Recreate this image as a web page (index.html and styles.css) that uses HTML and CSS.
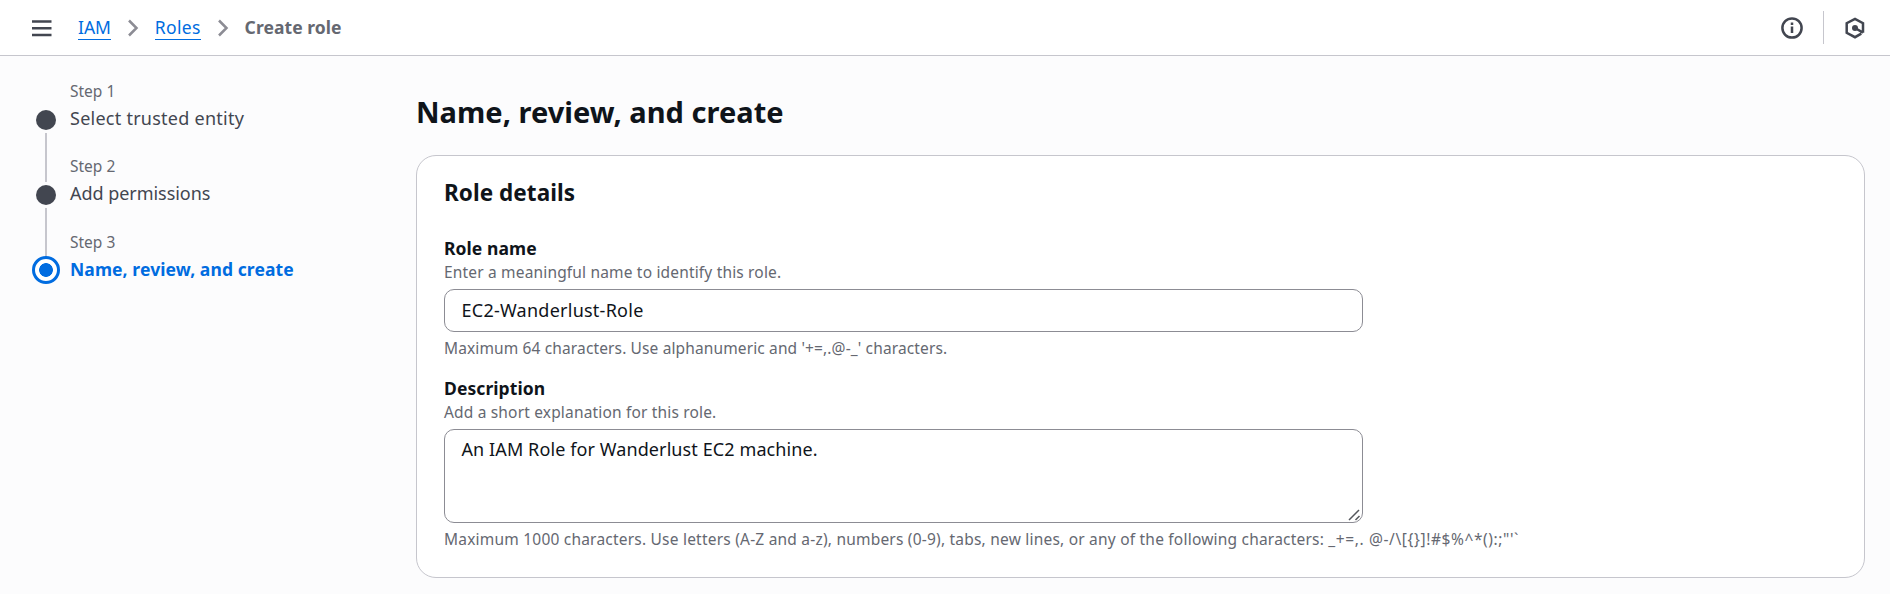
FILE: index.html
```
<!DOCTYPE html>
<html lang="en">
<head>
<meta charset="utf-8">
<title>Create role | IAM</title>
<link rel="stylesheet" href="styles.css">
</head>
<body>
<header class="topbar">
  <svg class="menu-icon" width="20" height="20" viewBox="0 0 20 20"><path d="M0 3.500h19.500M0 10.300h19.500M0 17.100h19.500"/></svg>
  <nav class="crumbs">
    <a class="crumb" href="#">IAM</a>
    <svg class="chevron" width="12" height="20" viewBox="0 0 12 20"><path d="M2 2.500l7.500 7.500L2 17.500"/></svg>
    <a class="crumb crumb-roles" href="#">Roles</a>
    <svg class="chevron" width="12" height="20" viewBox="0 0 12 20"><path d="M2 2.500l7.500 7.500L2 17.500"/></svg>
    <span class="crumb-current">Create role</span>
  </nav>
  <div class="tools">
    <svg class="info-icon" width="22" height="22" viewBox="0 0 22 22"><circle cx="11" cy="11" r="9.600"/><path d="M11 9.500v6.500M11 5.500v2.500"/></svg>
    <span class="divider"></span>
    <svg class="hex-icon" width="22" height="22" viewBox="0 0 22 22"><path d="M19 15.800V6.200L11 1.800 2.700 6.200v9.600L11 20.200l6.300-3.600M11 11l8 4.600"/><circle cx="11" cy="11" r="3"/></svg>
  </div>
</header>
<div class="layout">
  <ol class="steps">
    <li class="step">
      <span class="rail"><span class="dot"></span><span class="line"></span></span>
      <div class="step-text"><span class="step-count">Step 1</span><span class="step-name step-name-entity">Select trusted entity</span></div>
    </li>
    <li class="step">
      <span class="rail"><span class="dot"></span><span class="line"></span></span>
      <div class="step-text"><span class="step-count">Step 2</span><span class="step-name">Add permissions</span></div>
    </li>
    <li class="step step-active">
      <span class="rail"><span class="dot"></span></span>
      <div class="step-text"><span class="step-count">Step 3</span><span class="step-name">Name, review, and create</span></div>
    </li>
  </ol>
  <main class="content">
    <h1 class="title">Name, review, and create</h1>
    <section class="card">
      <h2 class="card-title">Role details</h2>
      <div class="field">
        <label class="label" for="role-name">Role name</label>
        <p class="hint">Enter a meaningful name to identify this role.</p>
        <input class="control input" id="role-name" type="text" value="EC2-Wanderlust-Role">
        <p class="hint constraint">Maximum 64 characters. Use alphanumeric and '+=,.@-_' characters.</p>
      </div>
      <div class="field">
        <label class="label" for="role-desc">Description</label>
        <p class="hint">Add a short explanation for this role.</p>
        <div class="textarea-wrap">
          <textarea class="control textarea" id="role-desc">An IAM Role for Wanderlust EC2 machine.</textarea>
          <svg class="grip" width="13" height="12" viewBox="0 0 13 12"><path d="M1 11L11 1M7.500 11l4-4"/></svg>
        </div>
        <p class="hint constraint constraint-long">Maximum 1000 characters. Use letters (A-Z and a-z), numbers (0-9), tabs, new lines, or any of the following characters: <span class="symbols">_+=,. @-/\[{}]!#$%^*():;"'`</span></p>
      </div>
    </section>
  </main>
</div>
</body>
</html>
```
FILE: styles.css
```
* { box-sizing: border-box; }
body {
  margin: 0;
  min-height: 594px;
  background: #fcfcfd;
  color: #0f141a;
  font: 17.5px/25px "Noto Sans", "Open Sans", sans-serif;
  overflow: hidden;
}
h1, h2, p, ol { margin: 0; padding: 0; }
svg { display: block; fill: none; flex: none; }

.topbar {
  display: flex;
  align-items: center;
  height: 56px;
  padding: 0 24px 0 32px;
  background: #fff;
  border-bottom: 1px solid #c6c6cd;
}
.menu-icon { stroke: #424650; stroke-width: 2.500; }
.crumbs { display: flex; align-items: center; margin-left: 26px; }
.crumb {
  color: #006ce0;
  text-decoration: none;
  border-bottom: 1px solid #006ce0;
  line-height: 24px;
}
.crumb-roles { letter-spacing: .35px; }
.chevron { margin: 0 15.500px 0 16.300px; stroke: #8c8c94; stroke-width: 2.500; }
.crumb-current { color: #656871; font-weight: 700; letter-spacing: .06px; }
.tools { display: flex; align-items: center; margin-left: auto; }
.info-icon, .hex-icon { stroke: #424650; stroke-width: 2.500; }
.divider { width: 1px; height: 33px; margin: 0 20px; background: #c6c6cd; }
.hex-icon circle { fill: #424650; stroke: none; }

.layout { display: flex; }
.steps { list-style: none; width: 416px; padding: 25px 0 0 32px; }
.step { display: flex; height: 75.400px; }
.rail { display: flex; flex-direction: column; align-items: center; width: 28px; padding-top: 28.500px; }
.dot { flex: none; width: 20px; height: 20px; border-radius: 50%; background: #424650; }
.line { flex: none; width: 2px; height: 49px; margin-top: 3px; background: #c6c6cd; }
.step-text { display: flex; flex-direction: column; margin-left: 10px; }
.step-count { color: #656871; font-size: 15.500px; line-height: 20px; }
.step-name { margin-top: 5px; color: #424650; font-size: 18px; letter-spacing: -.04px; }
.step-name-entity { letter-spacing: .25px; }
.step-active .rail { padding-top: 24.500px; }
.step-active .dot {
  width: 28px;
  height: 28px;
  border: 3px solid #006ce0;
  background: radial-gradient(circle, #006ce0 6.500px, #fff 7.200px);
  background-origin: border-box;
}
.step-active .step-name { color: #006ce0; font-size: 17.500px; font-weight: 700; letter-spacing: .1px; }

.content { width: 1449px; padding-top: 37px; }
.title { font-size: 29px; line-height: 38px; letter-spacing: .03px; }
.card {
  height: 423px;
  margin-top: 24px;
  padding: 23px 27px;
  background: #fff;
  border: 1px solid #c6c6cd;
  border-radius: 20px;
}
.card-title { font-size: 22.500px; line-height: 28px; letter-spacing: .05px; }
.field { display: flex; flex-direction: column; margin-top: 29px; }
.field + .field { margin-top: 18px; }
.label { font-weight: 700; letter-spacing: .08px; }
.hint { color: #656871; font-size: 15.500px; line-height: 20px; letter-spacing: .17px; margin-top: 1px; }
.control {
  width: 919px;
  margin-top: 7px;
  border: 1px solid #8c8c94;
  border-radius: 10px;
  background: #fff;
  color: #0f141a;
  font: inherit;
  font-size: 18px;
  outline: none;
}
.input { height: 43px; padding: 0 16.500px 1px; letter-spacing: .25px; }
.textarea-wrap { position: relative; width: 919px; }
.textarea { display: block; height: 94px; padding: 7px 16.500px; letter-spacing: .1px; resize: none; }
.grip { position: absolute; right: 2px; bottom: 2px; stroke: #55575c; stroke-width: 1.500; }
.constraint { margin-top: 6px; letter-spacing: .13px; }
.constraint-long { letter-spacing: .21px; white-space: nowrap; }
.symbols { letter-spacing: .6px; }
```
